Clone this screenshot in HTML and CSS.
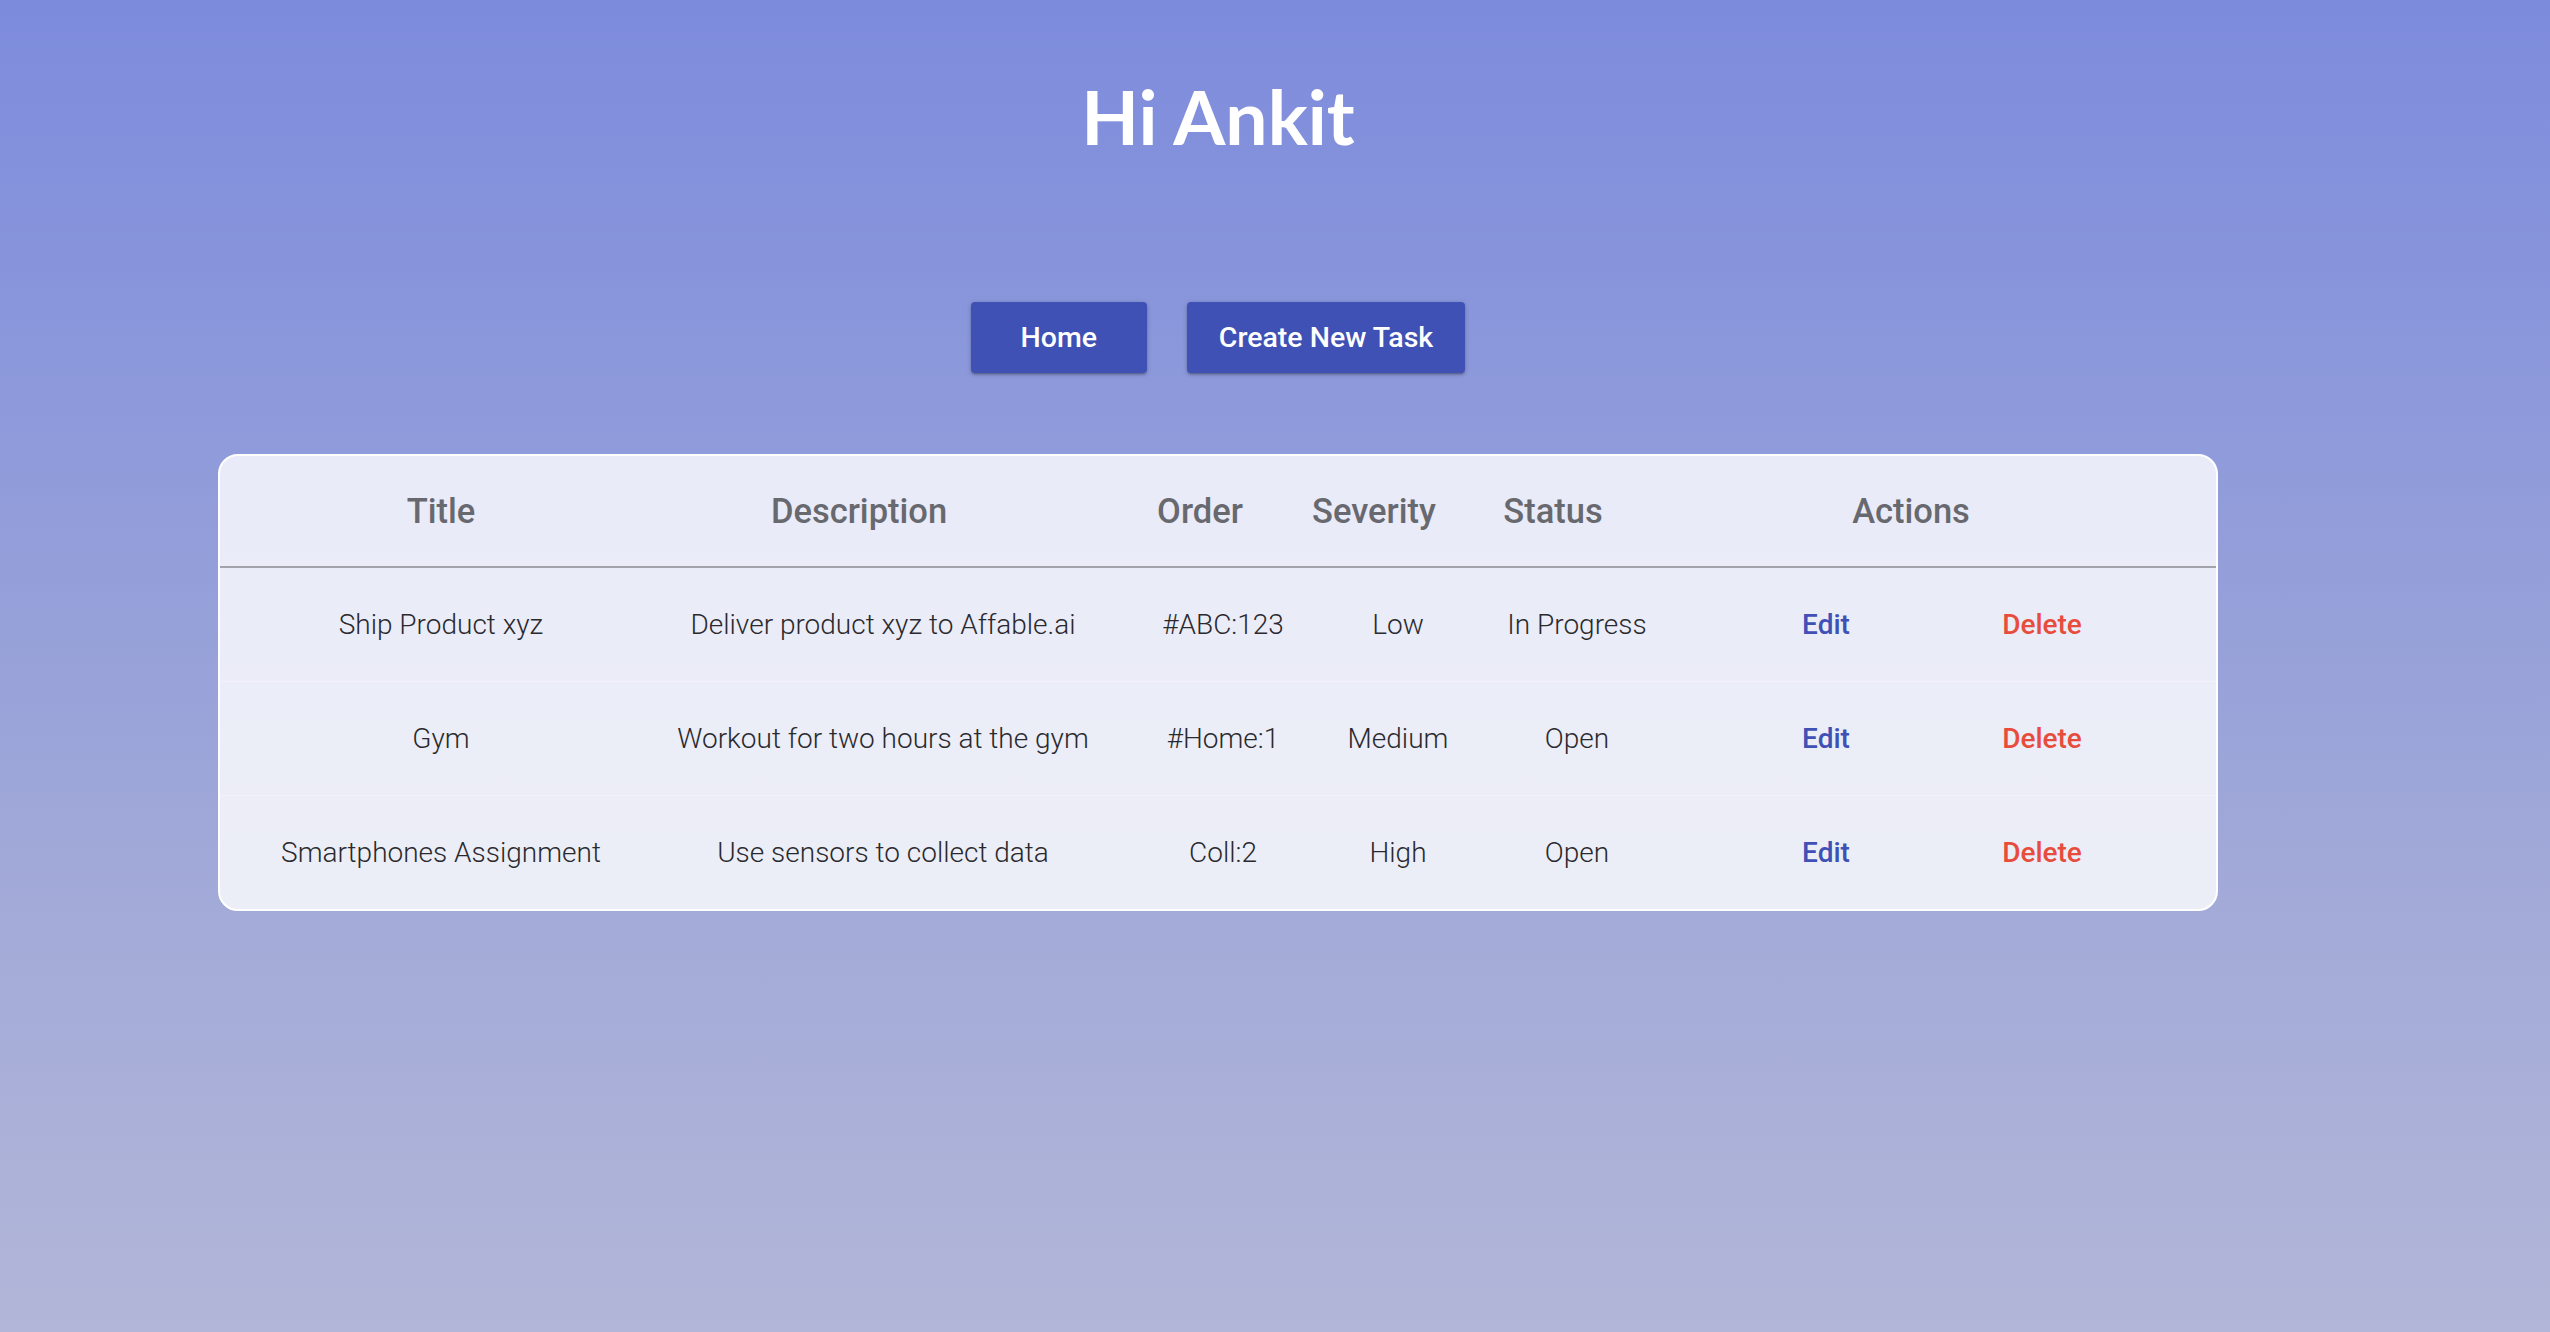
FILE: index.html
```html
<!DOCTYPE html>
<html lang="en">
<head>
<meta charset="utf-8">
<title>Tasks</title>
<link rel="stylesheet" href="styles.css">
</head>
<body>
<div class="page">
  <h1 class="greeting">Hi Ankit</h1>
  <nav class="actions-bar">
    <button class="btn">Home</button>
    <button class="btn">Create New Task</button>
  </nav>
  <section class="card">
    <div class="thead">
      <div class="th">Title</div>
      <div class="th">Description</div>
      <div class="th">Order</div>
      <div class="th">Severity</div>
      <div class="th">Status</div>
      <div class="th">Actions</div>
    </div>
    <div class="tr">
      <div class="td">Ship Product xyz</div>
      <div class="td">Deliver product xyz to Affable.ai</div>
      <div class="td">#ABC:123</div>
      <div class="td">Low</div>
      <div class="td">In Progress</div>
      <div class="td"><a class="link edit">Edit</a></div>
      <div class="td"><a class="link delete">Delete</a></div>
    </div>
    <div class="tr">
      <div class="td">Gym</div>
      <div class="td">Workout for two hours at the gym</div>
      <div class="td">#Home:1</div>
      <div class="td">Medium</div>
      <div class="td">Open</div>
      <div class="td"><a class="link edit">Edit</a></div>
      <div class="td"><a class="link delete">Delete</a></div>
    </div>
    <div class="tr last">
      <div class="td">Smartphones Assignment</div>
      <div class="td">Use sensors to collect data</div>
      <div class="td">Coll:2</div>
      <div class="td">High</div>
      <div class="td">Open</div>
      <div class="td"><a class="link edit">Edit</a></div>
      <div class="td"><a class="link delete">Delete</a></div>
    </div>
  </section>
</div>
</body>
</html>
```

FILE: styles.css
```css
html, body {
  margin: 0;
  padding: 0;
}
body {
  min-height: 1332px;
  background: linear-gradient(180deg, #7d8bdd 0%, #8a97db 25%, #a1a9d8 65%, #b2b6d8 100%);
  font-family: "Liberation Sans", Arial, sans-serif;
}
.page {
  width: 2436px;
  display: flex;
  flex-direction: column;
  align-items: center;
}
.greeting {
  margin: 71px 0 0;
  font-family: Lato, "Open Sans", sans-serif;
  font-weight: 700;
  font-size: 75px;
  line-height: 90px;
  color: #ffffff;
}
.actions-bar {
  margin-top: 141px;
  display: flex;
  gap: 40px;
}
.btn {
  height: 71px;
  min-width: 176px;
  padding: 0 32px;
  border: none;
  border-radius: 4px;
  background: #3f51b5;
  color: #ffffff;
  font-family: Roboto, "Liberation Sans", sans-serif;
  font-weight: 500;
  font-size: 28.5px;
  box-shadow: 0 2px 2px 0 rgba(0,0,0,.14), 0 3px 1px -2px rgba(0,0,0,.12), 0 1px 5px 0 rgba(0,0,0,.2);
}
.card {
  margin-top: 81px;
  width: 1996px;
  border: 2px solid #ffffff;
  border-radius: 20px;
  background: rgba(255, 255, 255, 0.8);
  overflow: hidden;
}
.thead {
  display: grid;
  grid-template-columns: 310px 526px 156px 192px 166px 550px;
  padding-left: 66px;
  height: 110px;
  align-items: center;
  border-bottom: 2px solid #a3a3ab;
}
.th {
  text-align: center;
  white-space: nowrap;
  font-family: Roboto, "Liberation Sans", sans-serif;
  font-weight: 500;
  font-size: 34.5px;
  color: #68686f;
}
.tr {
  display: grid;
  grid-template-columns: 402px 482px 198px 152px 206px 292px 140px;
  padding-left: 20px;
  height: 113px;
  align-items: center;
  border-bottom: 1px solid rgba(255, 255, 255, 0.35);
}
.tr.last {
  border-bottom: none;
}
.td {
  text-align: center;
  white-space: nowrap;
  font-family: Roboto, "Liberation Sans", sans-serif;
  font-weight: 300;
  font-size: 28px;
  color: #2a2a2e;
}
.link {
  font-weight: 500;
  cursor: pointer;
}
.edit {
  color: #3f51b5;
}
.delete {
  color: #e74c3c;
}
```
